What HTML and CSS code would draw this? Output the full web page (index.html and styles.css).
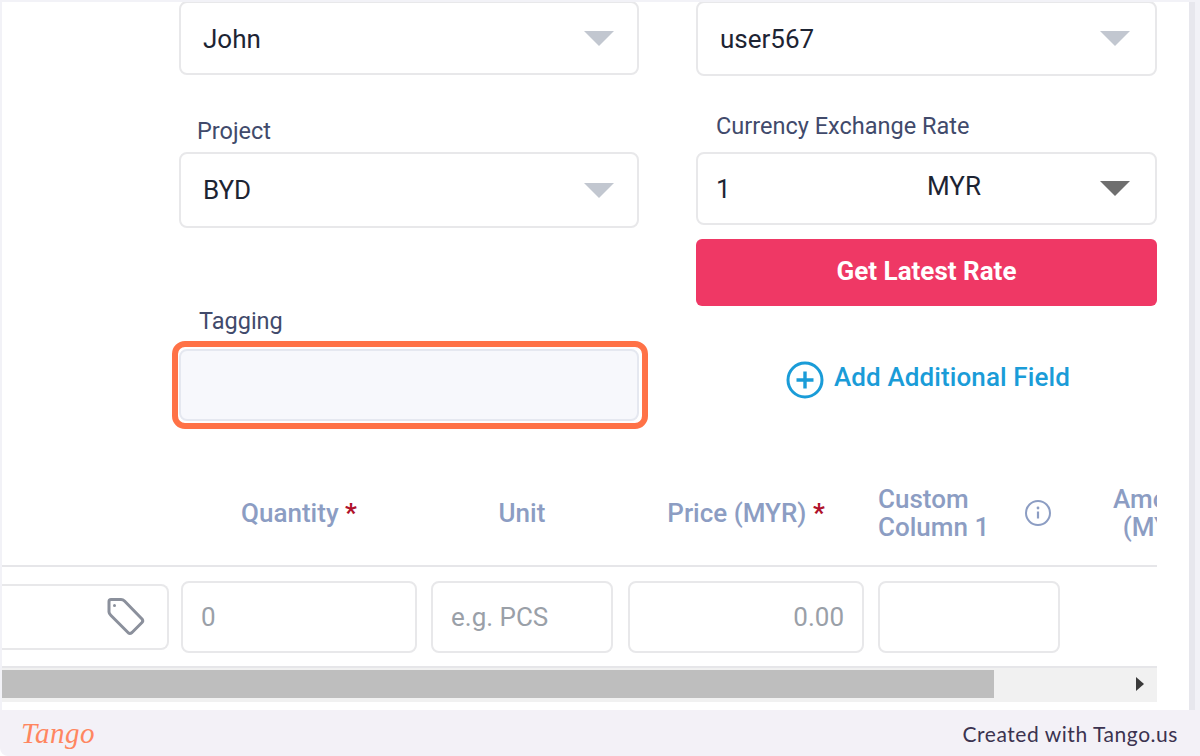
FILE: index.html
```html
<!DOCTYPE html>
<html>
<head>
  <meta name="viewport" content="width=device-width, initial-scale=1">
  <link rel="stylesheet" href="styles.css">
  <title>Expense form</title>
</head>
<body>

<div class="screen">
  <div class="panel">
    <div class="formGrid">
      <div class="formCol">
        <div class="selectBox firstBox">
          <span>John</span>
          <i class="caret"></i>
        </div>
        <label class="fieldLabel projectLabel">Project</label>
        <div class="selectBox projectBox">
          <span>BYD</span>
          <i class="caret"></i>
        </div>
        <label class="fieldLabel taggingLabel">Tagging</label>
        <div class="taggingWrap">
          <div class="taggingInput"></div>
          <div class="highlight"></div>
        </div>
      </div>

      <div class="formCol">
        <div class="selectBox firstBox userBox">
          <span>user567</span>
          <i class="caret"></i>
        </div>
        <label class="fieldLabel currencyLabel">Currency Exchange Rate</label>
        <div class="selectBox rateBox">
          <span class="rateValue">1</span>
          <span class="rateCurrency">MYR</span>
          <i class="caret darkCaret"></i>
        </div>
        <button class="latestBtn">Get Latest Rate</button>
        <div class="addField">
          <svg class="addIcon" width="38" height="38" viewBox="0 0 38 38">
            <circle cx="19" cy="19" r="17" fill="none" stroke="#1a9cd8" stroke-width="3"/>
            <path d="M19 10.5v17M10.5 19h17" fill="none" stroke="#1a9cd8" stroke-width="3.4"/>
          </svg>
          <span>Add Additional Field</span>
        </div>
      </div>
    </div>

    <div class="itemTable">
      <div class="headRow">
        <div class="cell tagCol"></div>
        <div class="cell qtyCol">Quantity <b class="req">*</b></div>
        <div class="cell unitCol">Unit</div>
        <div class="cell priceCol">Price (MYR) <b class="req">*</b></div>
        <div class="cell customCol">
          <span class="customName">Custom<br>Column 1</span>
          <svg class="infoIcon" width="26" height="26" viewBox="0 0 26 26">
            <circle cx="13" cy="13" r="12" fill="none" stroke="#8c9dc3" stroke-width="2"/>
            <path d="M13 11.5v7" fill="none" stroke="#8c9dc3" stroke-width="2.2"/>
            <circle cx="13" cy="8" r="1.4" fill="#8c9dc3"/>
          </svg>
        </div>
        <div class="cell amountCol">Amount<br>(MYR)</div>
      </div>

      <div class="inputRow">
        <div class="inputBox tagCol tagBox">
          <svg width="38" height="38" viewBox="0 0 38 38">
            <path d="M2 3.5Q2 1.5 4 1.5L14 1.5Q16 1.5 17.5 3L35 21Q36.5 23 35 24.5L25 34.5Q23 36 21.5 35L4 17.5Q2 15.5 2 14Z" fill="none" stroke="#8b909c" stroke-width="3" stroke-linejoin="round"/>
            <circle cx="7.5" cy="7.5" r="1.5" fill="#8b909c"/>
          </svg>
        </div>
        <div class="inputBox qtyCol">0</div>
        <div class="inputBox unitCol">e.g. PCS</div>
        <div class="inputBox priceCol">0.00</div>
        <div class="inputBox customCol"></div>
      </div>

      <div class="scrollTrack">
        <div class="scrollThumb"></div>
        <i class="scrollArrow"></i>
      </div>
    </div>
  </div>
</div>

<div class="footer">
  <span class="tangoLogo">Tango</span>
  <span class="createdWith">Created with Tango.us</span>
</div>

</body>
</html>
```

FILE: styles.css
```css
html, body {
  margin: 0;
  height: 756px;
  overflow: hidden;
  background-color: #fff;
  font-family: Roboto, sans-serif;
}

.screen {
  height: 708px;
  padding: 2px 0 0 2px;
  background-color: #f2f2f7;
}

.panel {
  width: 1187px;
  height: 708px;
  overflow: hidden;
  background-color: #fff;
  border-right: 6px solid #e7e7ed;
}

.formGrid {
  display: flex;
  gap: 57px;
  height: 419px;
  padding-left: 177px;
}

.formCol {
  width: 460px;
  display: flex;
  flex-direction: column;
}

.selectBox {
  box-sizing: border-box;
  display: flex;
  align-items: center;
  justify-content: space-between;
  padding: 0 23px 0 22px;
  border: 2px solid #e8e8ea;
  border-radius: 8px;
  font-size: 26px;
  color: #1d2433;
}

.firstBox {
  margin-top: -1px;
  height: 74px;
}

.firstBox span {
  padding-top: 2px;
}

.userBox {
  height: 75px;
  width: 461px;
  padding-right: 25px;
}

.userBox span {
  padding-top: 0;
}

.caret {
  border-left: 15px solid transparent;
  border-right: 15px solid transparent;
  border-top: 15px solid #c2c7d0;
}

.darkCaret {
  border-top-color: #6f6f6f;
  margin-left: auto;
}

.fieldLabel {
  display: block;
  font-size: 23.5px;
  line-height: 26px;
  color: #414a6b;
}

.projectLabel {
  margin: 43px 0 8px 18px;
}

.projectBox {
  height: 76px;
}

.taggingLabel {
  margin: 80px 0 15px 20px;
}

.taggingWrap {
  position: relative;
}

.taggingInput {
  box-sizing: border-box;
  height: 72px;
  background-color: #f7f8fc;
  border: 2px solid #e5e8f0;
  border-radius: 8px;
}

.highlight {
  position: absolute;
  top: -8px;
  left: -7px;
  right: -9px;
  bottom: -8px;
  border: 6px solid #ff7247;
  border-radius: 13px;
}

.currencyLabel {
  margin: 37px 0 13px 20px;
}

.rateBox {
  width: 461px;
  height: 73px;
  padding-left: 18px;
  padding-right: 25px;
  justify-content: flex-start;
}

.rateValue {
  width: 211px;
}

.rateCurrency {
  padding-bottom: 6px;
}

.latestBtn {
  width: 461px;
  height: 67px;
  margin-top: 14px;
  padding: 0 0 4px;
  border: 0;
  border-radius: 6px;
  background-color: #ef3865;
  color: #fff;
  font-family: Roboto, sans-serif;
  font-size: 26px;
  font-weight: 700;
}

.addField {
  display: flex;
  align-items: center;
  gap: 10px;
  margin: 55px 0 0 90px;
  font-size: 26px;
  font-weight: 500;
  color: #1a9cd8;
}

.addField span {
  padding-bottom: 6px;
  letter-spacing: 0.1px;
}

.itemTable {
  width: 1155px;
  margin-top: 65px;
  overflow: hidden;
}

.headRow, .inputRow {
  display: flex;
  align-items: center;
  width: 1300px;
}

.headRow {
  height: 54px;
  padding-bottom: 25px;
  border-bottom: 2px solid #e6e6e9;
  font-size: 26px;
  font-weight: 500;
  color: #8c9dc3;
}

.tagCol {
  width: 167px;
  margin-right: 12px;
  flex-shrink: 0;
}

.qtyCol {
  width: 236px;
  margin-right: 14px;
  flex-shrink: 0;
}

.unitCol {
  width: 182px;
  margin-right: 15px;
  flex-shrink: 0;
}

.priceCol {
  width: 236px;
  margin-right: 14px;
  flex-shrink: 0;
}

.customCol {
  width: 182px;
  margin-right: 14px;
  flex-shrink: 0;
}

.headRow .cell {
  text-align: center;
}

.headRow .customCol {
  display: flex;
  align-items: center;
  text-align: left;
  line-height: 28px;
  white-space: nowrap;
}

.infoIcon {
  margin-left: 36px;
  flex-shrink: 0;
}

.amountCol {
  width: 170px;
  line-height: 28px;
  flex-shrink: 0;
}

.req {
  color: #b0122b;
  font-weight: 700;
}

.inputRow {
  box-sizing: border-box;
  height: 101px;
  border-bottom: 2px solid #e6e6e9;
}

.inputBox {
  box-sizing: border-box;
  height: 72px;
  display: flex;
  align-items: center;
  padding: 0 18px;
  border: 2px solid #e8e8ea;
  border-radius: 8px;
  font-size: 26px;
  color: #9aa0a8;
}

.tagBox {
  height: 66px;
  justify-content: flex-end;
  padding-right: 22px;
  border-left: 0;
  border-radius: 0 8px 8px 0;
}

.priceCol.inputBox {
  justify-content: flex-end;
}

.scrollTrack {
  display: flex;
  align-items: center;
  justify-content: space-between;
  height: 34px;
  padding: 2px 13px 4px 0;
  box-sizing: border-box;
  background-color: #f1f1f1;
}

.scrollThumb {
  width: 992px;
  height: 28px;
  background-color: #bebebe;
}

.scrollArrow {
  border-left: 8px solid #3a3a3a;
  border-top: 7px solid transparent;
  border-bottom: 7px solid transparent;
}

.footer {
  display: flex;
  align-items: center;
  justify-content: space-between;
  height: 46px;
  padding: 0 22px 0 21px;
  background-color: #f3f1f7;
  border-bottom-left-radius: 8px;
}

.tangoLogo {
  font-family: "Liberation Serif", serif;
  font-style: italic;
  font-size: 29px;
  letter-spacing: 0.5px;
  color: #ff8660;
}

.createdWith {
  font-family: Lato, sans-serif;
  font-size: 21px;
  letter-spacing: 0.55px;
  color: #3b3350;
}
```
